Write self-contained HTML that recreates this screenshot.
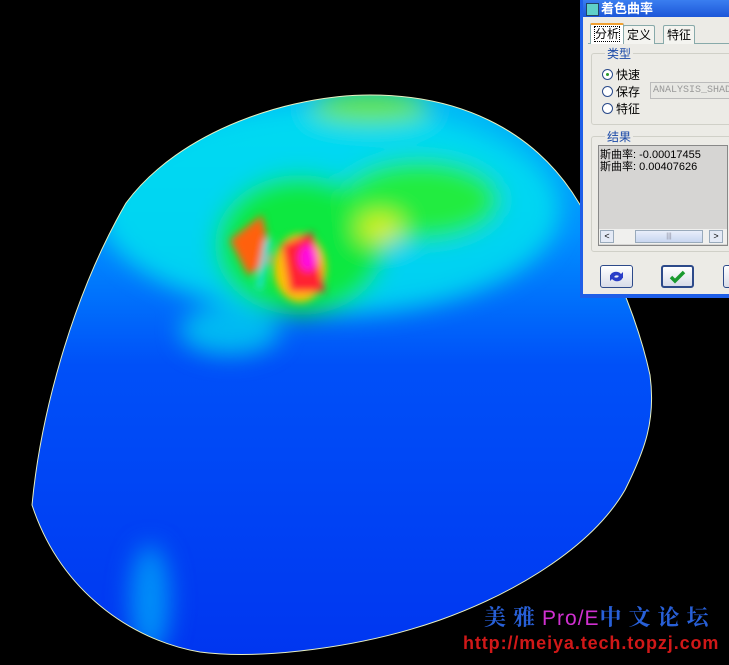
<!DOCTYPE html>
<html><head><meta charset="utf-8"><style>
*{margin:0;padding:0;box-sizing:border-box}
body{width:729px;height:665px;background:#000;position:relative;overflow:hidden;font-family:"Liberation Sans","Noto Sans CJK SC",sans-serif}
#dlg{position:absolute;left:580px;top:0;width:160px;height:298px;background:#ecebe6;border-left:3px solid #1e5ee8;border-bottom:4px solid #1e5ee8}
#title{height:17px;background:linear-gradient(#3a7ef0,#1c56d8);color:#fff;font-weight:bold;font-size:13px;line-height:17px;padding-left:18px;position:relative}
#title:before{content:"";position:absolute;left:3px;top:3px;width:11px;height:11px;background:#5fd0c8;border:1px solid #246}
.tab{position:absolute;top:25px;height:19px;font-size:12px;line-height:18px;border:1px solid #8aa;border-bottom:none;background:#f4f4f0;padding:0 3px;border-radius:2px 2px 0 0}
.grp{position:absolute;left:8px;width:150px;border:1px solid #d0d0c8;border-radius:3px}
.lbl{position:absolute;font-size:12px;color:#1a49a8;background:#ecebe6;padding:0 2px}
.rad{position:absolute;left:19px;font-size:12px;color:#000}
.rad i{display:inline-block;width:11px;height:11px;border:1px solid #2a4a8a;border-radius:50%;background:#fff;vertical-align:-1px;margin-right:3px;position:relative}
.rad i.on:after{content:"";position:absolute;left:3px;top:3px;width:3px;height:3px;background:#2a9a2a;border-radius:50%}
.btn{position:absolute;top:265px;width:33px;height:23px;border:1px solid #2d4a8a;border-radius:3px;background:linear-gradient(#fff,#d8dce8)}
</style></head><body>
<svg width="729" height="665" style="position:absolute;left:0;top:0">
<defs>
<clipPath id="c"><path id="p" d="M32,505 C40,420 70,300 126,203 C180,130 290,95 370,95 C460,95 530,130 572,192 C610,250 638,320 650,375 C656,420 645,450 625,490 C590,550 510,595 440,620 C360,648 260,660 200,652 C130,640 60,590 32,505 Z"/></clipPath>
<filter id="b"><feGaussianBlur stdDeviation="12"/></filter>
<filter id="b2"><feGaussianBlur stdDeviation="4"/></filter>
<linearGradient id="g" x1="0" y1="0" x2="0" y2="1"><stop offset="0" stop-color="#00d8f0"/><stop offset="0.35" stop-color="#0090ff"/><stop offset="0.55" stop-color="#0050f8"/><stop offset="1" stop-color="#0035f0"/></linearGradient>
</defs>
<g clip-path="url(#c)">
<rect width="729" height="665" fill="url(#g)"/>
<g filter="url(#b)">
<ellipse cx="330" cy="210" rx="230" ry="105" fill="#00e0f0" opacity="0.85"/>
<ellipse cx="300" cy="245" rx="85" ry="70" fill="#10e840"/>
<ellipse cx="420" cy="200" rx="80" ry="40" fill="#20ec40"/>
<ellipse cx="370" cy="108" rx="60" ry="14" fill="#70e820"/>
<ellipse cx="380" cy="228" rx="22" ry="14" fill="#e0f000"/>
<ellipse cx="230" cy="330" rx="50" ry="25" fill="#00d0f0" opacity="0.8"/>
<ellipse cx="150" cy="600" rx="20" ry="55" fill="#0090f8"/>
</g>
<g filter="url(#b2)">
<polygon points="230,240 262,215 272,262 248,275" fill="#ff6010"/>
<ellipse cx="300" cy="268" rx="26" ry="34" fill="#ffc000"/>
<polygon points="282,245 312,232 325,292 290,292" fill="#ff2030"/>
<ellipse cx="308" cy="258" rx="9" ry="13" fill="#ff10e0"/>
<polygon points="265,240 272,238 262,290 256,288" fill="#20e0e0"/>
</g>
</g>
<use href="#p" fill="none" stroke="#e8f0c0" stroke-width="1"/>
</svg>
<div id="dlg">
<div id="title">着色曲率</div>
<div style="position:absolute;left:5px;top:43px;width:150px;border-top:1px solid #8aa"></div>
<div class="tab" style="left:7px;top:23px;height:21px;border-top:2px solid #f0a030;background:#fff"><span style="border:1px dotted #000">分析</span></div>
<div class="tab" style="left:40px">定义</div>
<div class="tab" style="left:80px">特征</div>
<div class="grp" style="top:53px;height:72px"></div>
<div class="lbl" style="left:22px;top:45px">类型</div>
<div class="rad" style="top:66px"><i class="on"></i>快速</div>
<div class="rad" style="top:83px"><i></i>保存</div>
<div class="rad" style="top:100px"><i></i>特征</div>
<div style="position:absolute;left:67px;top:82px;width:90px;height:17px;border:1px solid #bbb;background:#e8e8e4;color:#999;font-family:'Liberation Mono',monospace;font-size:10px;line-height:15px;padding-left:2px;white-space:nowrap;overflow:hidden">ANALYSIS_SHADE</div>
<div class="grp" style="top:136px;height:116px"></div>
<div class="lbl" style="left:22px;top:128px">结果</div>
<div style="position:absolute;left:15px;top:145px;width:130px;height:101px;border:1px solid #888;background:#d6d5d3;font-size:11px;line-height:12px;padding:3px 0 0 1px;white-space:nowrap;overflow:hidden">斯曲率: -0.00017455<br>斯曲率: 0.00407626</div>
<div style="position:absolute;left:16px;top:229px;width:128px;height:15px;background:#f0f0ee">
<div style="position:absolute;left:1px;top:1px;width:14px;height:13px;border:1px solid #9ab;background:#e4eaf6;font-size:9px;text-align:center;line-height:11px">&lt;</div>
<div style="position:absolute;left:36px;top:1px;width:68px;height:13px;border:1px solid #9ab;background:linear-gradient(#e8eefa,#c8d6f0);font-size:7px;text-align:center;line-height:11px;color:#889">|||</div>
<div style="position:absolute;left:110px;top:1px;width:14px;height:13px;border:1px solid #9ab;background:#e4eaf6;font-size:9px;text-align:center;line-height:11px">&gt;</div>
</div>
<div class="btn" style="left:17px"><svg width="31" height="21"><path d="M9,11 a6,5 0 0 1 11,-3 l2,-2 v6 h-6 l2,-2 a4,3 0 0 0 -6,1z M22,10 a6,5 0 0 1 -11,3 l-2,2 v-6 h6 l-2,2 a4,3 0 0 0 6,-1z" fill="#2a3ec8"/></svg></div>
<div class="btn" style="left:78px;border-width:2px"><svg width="29" height="19"><path d="M8,10 l4,4 l9,-9" stroke="#1a9a30" stroke-width="3.5" fill="none"/></svg></div>
<div class="btn" style="left:140px"></div>
</div>
<div style="position:absolute;left:484px;top:601px;font-size:22px;color:#2860d8;font-family:'Noto Serif CJK SC',serif;letter-spacing:7px;white-space:nowrap;font-weight:bold">美雅<span style="color:#d030d0;font-family:'Liberation Sans',sans-serif;font-size:21px;letter-spacing:1px;font-weight:normal">Pro/E</span>中文论坛</div>
<div style="position:absolute;left:463px;top:633px;font-size:18px;font-weight:bold;color:#d01818;letter-spacing:0.9px;white-space:nowrap">http://meiya.tech.topzj.com</div>
</body></html>
